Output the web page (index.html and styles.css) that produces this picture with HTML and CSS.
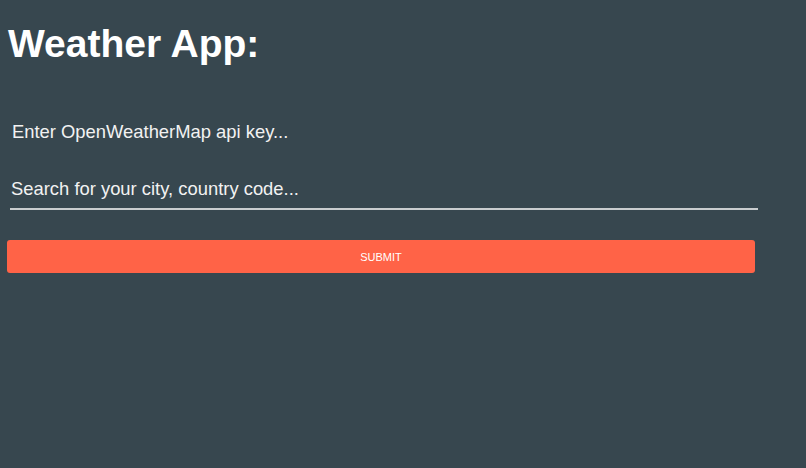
FILE: index.html
```html
<!DOCTYPE html>
<html lang="en">
<head>
    <meta charset="UTF-8">
    <meta name="viewport" content="width=device-width, initial-scale=1.0">
    <title>Weather App</title>
    <link rel="stylesheet" href="styles.css">
</head>
<body>
    <div class="app">
        <h1 class="title">Weather App:</h1>
        <form class="search_form">
            <input type="text" class="api_key" placeholder="Enter OpenWeatherMap api key...">
            <input type="text" class="city" placeholder="Search for your city, country code..." autofocus>
            <button type="button" class="submit_btn">SUBMIT</button>
        </form>
    </div>
</body>
</html>
```

FILE: styles.css
```css
*{
    padding: 0;
    margin: 0;
    box-sizing: border-box;
}

body{
    background: #37474f;
    font-family: "Liberation Sans", Arial, sans-serif;
    color: #fff;
    height: 100vh;
}

.app{
    padding: 22px 7px;
}

.title{
    font-size: 39px;
    font-weight: bold;
    line-height: 44px;
    padding-left: 1px;
}

.search_form{
    display: flex;
    flex-direction: column;
    width: 748px;
    margin-top: 51px;
}

.search_form input{
    background: transparent;
    border: none;
    outline: none;
    color: #fff;
    font-family: inherit;
    font-size: 18.4px;
    padding: 4px 2px;
    height: 30px;
    width: 748px;
    margin-left: 3px;
}

.search_form input::placeholder{
    color: #f2f2f2;
    opacity: 1;
}

.search_form .city{
    margin-top: 29px;
    padding: 0 1px 6px;
    border-bottom: 2px solid #c9cdcf;
    height: 34px;
    caret-color: #fff;
}

.submit_btn{
    margin-top: 30px;
    height: 33px;
    background: #ff6347;
    border: none;
    border-radius: 3px;
    color: #fff;
    font-family: inherit;
    font-size: 11px;
    cursor: pointer;
}
```
